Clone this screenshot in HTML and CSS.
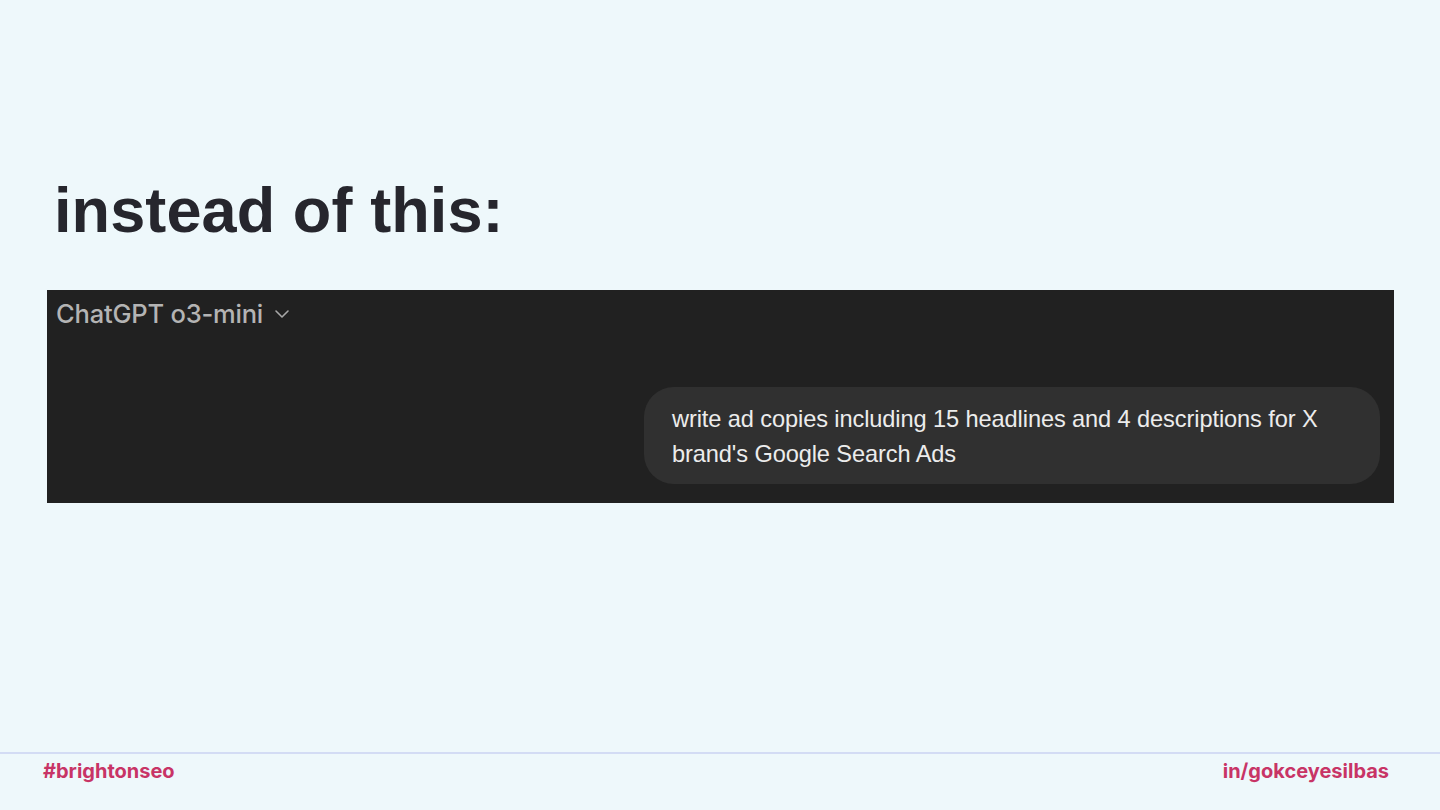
FILE: index.html
```html
<!DOCTYPE html>
<html>
<head>
<meta charset="utf-8">
<link rel="stylesheet" href="styles.css">
</head>
<body>
<div class="slide">
  <main class="content">
    <h1 class="title">instead of this:</h1>
    <section class="chat">
      <div class="model">
        <span class="model-name">ChatGPT o3-mini</span>
        <svg class="chev" width="16" height="10" viewBox="0 0 16 10"><path d="M2 2 L8 8 L14 2" fill="none" stroke="#a8a8a8" stroke-width="1.6" stroke-linecap="round" stroke-linejoin="round"/></svg>
      </div>
      <div class="row">
        <div class="bubble">write ad copies including 15 headlines and 4 descriptions for X brand's Google Search Ads</div>
      </div>
    </section>
  </main>
  <footer class="footer">
    <span class="tag">#brightonseo</span>
    <span class="tag">in/gokceyesilbas</span>
  </footer>
</div>
</body>
</html>
```

FILE: styles.css
```css
* { box-sizing: border-box; }
html, body { margin: 0; padding: 0; }
body { background: #eef8fb; width: 1440px; height: 810px; overflow: hidden; }
.slide { width: 1440px; height: 810px; display: flex; flex-direction: column; }
.content { flex: 1; padding: 0 46px 0 47px; }
.title {
  margin: 172px 0 0 7px;
  font-family: "Liberation Sans", Arial, sans-serif;
  font-weight: 700;
  font-size: 63px;
  line-height: 76px;
  color: #26262d;
  letter-spacing: 0.1px;
}
.chat {
  margin-top: 42px;
  background: #212121;
  height: 213px;
  padding: 8px 14px 0 9px;
}
.model { display: flex; align-items: center; height: 30px; }
.model-name {
  font-family: Inter, "Noto Sans", sans-serif;
  font-size: 25.5px;
  font-weight: 500;
  color: #b4b4b4;
  letter-spacing: -0.2px;
}
.chev { margin-left: 11px; margin-top: 2px; }
.row { display: flex; justify-content: flex-end; margin-top: 59px; }
.bubble {
  width: 736px;
  height: 97px;
  background: #303030;
  border-radius: 30px;
  padding: 15px 30px 0 28px;
  font-family: "Liberation Sans", Arial, sans-serif;
  font-size: 23.6px;
  line-height: 35px;
  color: #ececec;
  letter-spacing: -0.1px;
}
.footer {
  height: 58px;
  border-top: 2px solid #d3dcf4;
  display: flex;
  justify-content: space-between;
  align-items: flex-start;
  padding: 4px 51px 0 43px;
}
.tag {
  font-family: Inter, "Noto Sans", sans-serif;
  font-weight: 700;
  font-size: 20px;
  line-height: 26px;
  color: #c83466;
}
```
